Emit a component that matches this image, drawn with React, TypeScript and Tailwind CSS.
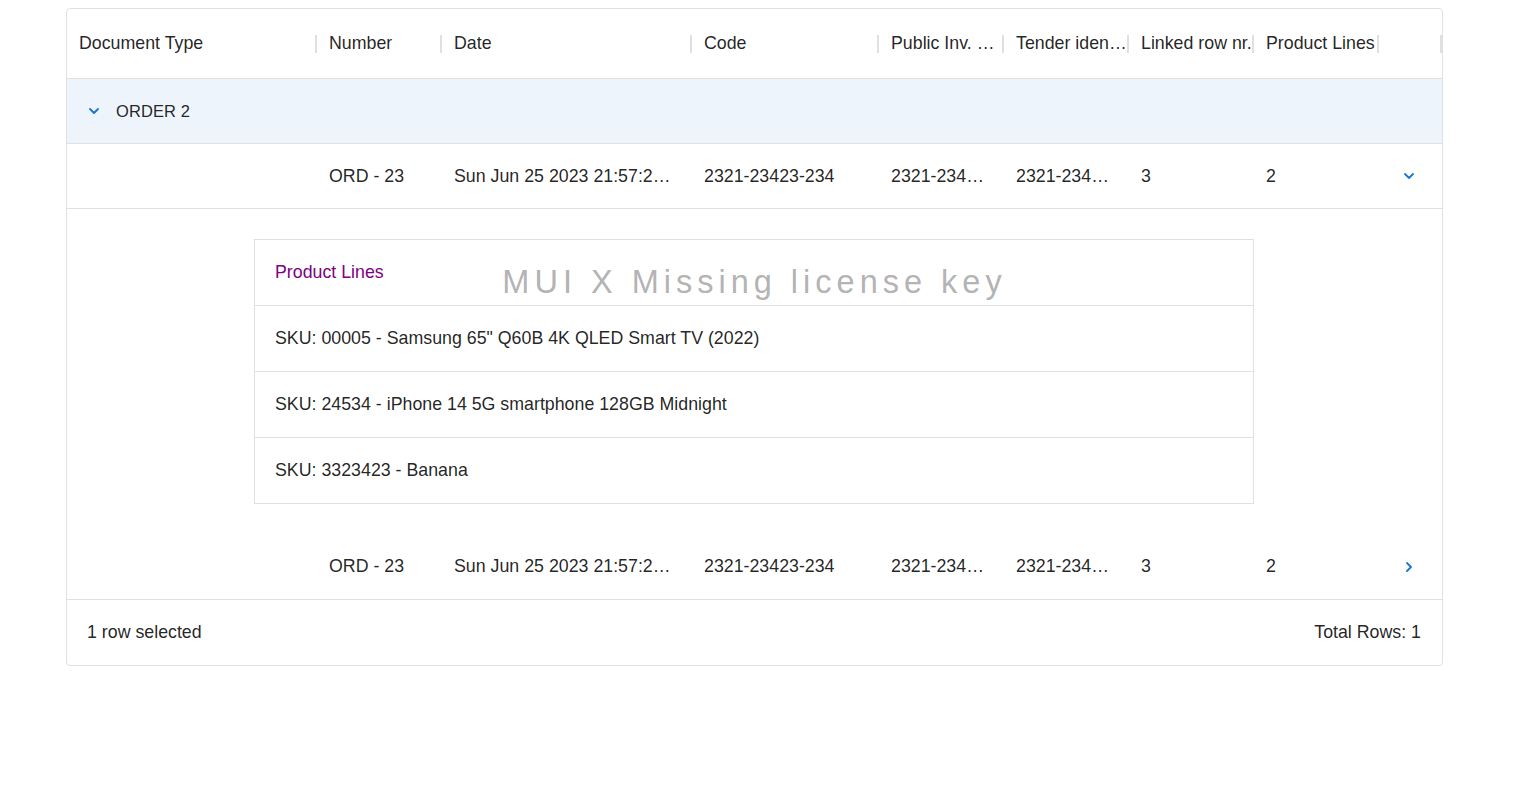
import React from 'react';
import { ChevronDown, ChevronRight } from 'lucide-react';

const columns = [
  { label: 'Document Type', width: 'w-[250px]' },
  { label: 'Number', width: 'w-[125px]' },
  { label: 'Date', width: 'w-[250px]' },
  { label: 'Code', width: 'w-[187px]' },
  { label: 'Public Inv. …', width: 'w-[125px]' },
  { label: 'Tender iden…', width: 'w-[125px]' },
  { label: 'Linked row nr.', width: 'w-[125px]' },
  { label: 'Product Lines', width: 'w-[125px]' },
  { label: '', width: 'w-[63px]' },
];

const rowValues = ['', 'ORD - 23', 'Sun Jun 25 2023 21:57:2…', '2321-23423-234', '2321-234…', '2321-234…', '3', '2'];

const productLines = [
  'SKU: 00005 - Samsung 65" Q60B 4K QLED Smart TV (2022)',
  'SKU: 24534 - iPhone 14 5G smartphone 128GB Midnight',
  'SKU: 3323423 - Banana',
];

const DataRow: React.FC<{ expanded: boolean; tall?: boolean }> = ({ expanded, tall }) => (
  <div className={`flex ${tall ? 'h-[66px]' : 'h-[65px]'} border-b border-[#e0e0e0]`}>
    {rowValues.map((v, i) => (
      <div key={i} className={`${columns[i].width} shrink-0 flex items-center pl-3 pr-1 overflow-hidden whitespace-nowrap`}>
        {v}
      </div>
    ))}
    <div className="w-[63px] shrink-0 flex items-center justify-center">
      {expanded ? (
        <ChevronDown className="w-4 h-4 text-[#1976d2] ml-[-3px]" strokeWidth={2.75} />
      ) : (
        <ChevronRight className="w-4 h-4 text-[#1976d2] ml-[-3px]" strokeWidth={2.75} />
      )}
    </div>
  </div>
);

export default function App() {
  return (
    <div className="min-h-screen bg-white pl-[66px] pt-[8px] text-[17.8px] text-[rgba(0,0,0,0.87)]" style={{ fontFamily: '"Liberation Sans", Arial, sans-serif' }}>
      <div className="relative w-[1377px] border border-[#e0e0e0] rounded-[4px]">
        {/* header */}
        <div className="flex h-[70px] border-b border-[#e0e0e0]">
          {columns.map((c, i) => (
            <div key={i} className={`${c.width} shrink-0 flex items-center`}>
              <span className="flex-1 pl-3 whitespace-nowrap overflow-visible">{c.label}</span>
              <span className="w-[2px] h-[18px] bg-[#e0e0e0] shrink-0" />
            </div>
          ))}
        </div>

        {/* group row */}
        <div className="flex items-center h-[65px] border-b border-[#e0e0e0] bg-[rgba(25,118,210,0.08)] pl-[19px]">
          <ChevronDown className="w-4 h-4 text-[#1976d2]" strokeWidth={2.75} />
          <span className="ml-[14px] text-[16.5px] tracking-[0.1px]">ORDER 2</span>
        </div>

        <DataRow expanded />

        {/* detail panel */}
        <div className="pt-[30px] pb-[30px]">
          <div className="w-[1000px] ml-[187px] border border-[#e0e0e0]">
            <div className="h-[66px] border-b border-[#e0e0e0] flex items-center pl-5 text-[#800080]">Product Lines</div>
            {productLines.map((p, i) => (
              <div
                key={p}
                className={`${i < productLines.length - 1 ? 'h-[66px] border-b border-[#e0e0e0]' : 'h-[65px]'} flex items-center pl-5`}
              >
                {p}
              </div>
            ))}
          </div>
        </div>

        <DataRow expanded={false} tall />

        {/* footer */}
        <div className="flex items-center justify-between h-[65px] pl-5 pr-[21px]">
          <span>1 row selected</span>
          <span>Total Rows: 1</span>
        </div>

        <div className="pointer-events-none absolute inset-x-0 top-[257px] text-center text-[32.5px] leading-none tracking-[5px] text-[#8282829e]">
          MUI X Missing license key
        </div>
      </div>
    </div>
  );
}
